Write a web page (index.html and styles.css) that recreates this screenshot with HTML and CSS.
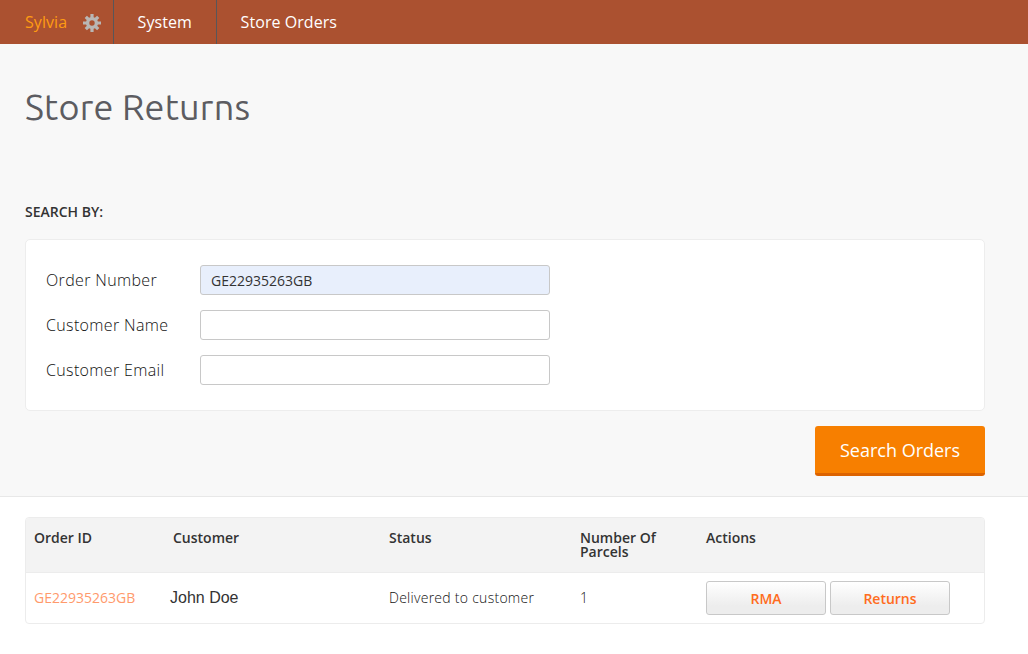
FILE: index.html
```html
<!doctype html>
<html>
<head>
	<meta charset="utf-8" />
	<meta name="viewport" content="width=device-width, initial-scale=1" />

	<title>Store Returns</title>

<link rel="stylesheet" href="styles.css">

</head>
<body>
<nav class="topbar">
	<a class="user" href="#">Sylvia
		<svg class="gear" viewBox="0 0 18 18">
			<g stroke="#b9b6b4" stroke-width="3.2">
				<path d="M9 0V5M9 13V18M0 9H5M13 9H18" />
				<path d="M2.8 2.8L6 6M12 12L15.2 15.2M15.2 2.8L12 6M6 12L2.8 15.2" />
			</g>
			<circle cx="9" cy="9" r="4.4" fill="none" stroke="#b9b6b4" stroke-width="3.4" />
		</svg>
	</a>
	<a href="#">System</a>
	<a href="#">Store Orders</a>
</nav>

<form class="search">
	<h1>Store Returns</h1>
	<h2>SEARCH BY:</h2>

	<div class="panel">
		<div class="field">
			<label for="number">Order Number</label>
			<input class="filled" id="number" type="text" value="GE22935263GB" />
		</div>
		<div class="field">
			<label for="name">Customer Name</label>
			<input id="name" type="text" />
		</div>
		<div class="field">
			<label for="email">Customer Email</label>
			<input id="email" type="text" />
		</div>
	</div>

	<button class="submit" type="button">Search Orders</button>
</form>

<div class="orders">
	<div class="row head">
		<span>Order ID</span>
		<span>Customer</span>
		<span>Status</span>
		<span>Number Of<br />Parcels</span>
		<span>Actions</span>
	</div>
	<div class="row">
		<a class="order" href="#">GE22935263GB</a>
		<span class="customer">John Doe</span>
		<span class="status">Delivered to customer</span>
		<span class="status">1</span>
		<div class="actions">
			<a class="button" href="#">RMA</a>
			<a class="button" href="#">Returns</a>
		</div>
	</div>
</div>

</body>
</html>
```

FILE: styles.css
```css
* {
	box-sizing: border-box;
}

body {
	margin: 0;

	background-color: #fff;
	color: #333;

	font-family: "Open Sans", "Noto Sans", sans-serif;
	font-size: 14px;
}

a {
	text-decoration: none;
}

.topbar {
	display: flex;

	height: 44px;
	background-color: #ab5130;
}

.topbar a {
	padding: 0 23px 0 23.6px;

	color: #fff;
	font-size: 16px;
	line-height: 44px;
	letter-spacing: 0.06px;
}

.topbar a + a {
	border-left: solid 1px #585659;
}

.topbar .user + a {
	width: 103px;
}

.topbar a.user {
	display: flex;
	align-items: center;
	gap: 16px;

	width: 113px;
	padding: 0 0 0 25px;

	color: #ff9c12;
}

.gear {
	flex: none;

	width:	18px;
	height:	18px;
	margin-top: 2px;
}

.search {
	display: flex;
	flex-direction: column;

	height: 453px;
	padding: 38px 43px 0 25px;

	border-bottom: solid 1px #e8e8e8;
	background-color: #f8f8f8;
}

h1 {
	margin: 0;

	color: #5c5c61;
	font-family: Ubuntu, "Open Sans", "Noto Sans", sans-serif;
	font-size: 36px;
	font-weight: normal;
	line-height: 50px;
	letter-spacing: 0.22px;
}

h2 {
	margin: 70px 0 17px;

	font-size: 14px;
	font-weight: 600;
	line-height: 20px;
}

.panel {
	height: 172px;
	padding: 25px 20px;

	border: solid 1px #ededed;
	border-radius: 5px;
	background-color: #fff;
}

.field {
	display: flex;
	align-items: center;

	height: 30px;
	margin-bottom: 15px;
}

.field label {
	width: 154px;

	color: #111;
	font-size: 16px;
	font-weight: 300;
	letter-spacing: 0.35px;
}

.field input {
	width: 350px;
	height: 30px;
	padding: 0 10px;

	border: solid 1px #c8c8c8;
	border-radius: 3px;
	background-color: #fff;

	color: #333;
	font: 14px "Open Sans", sans-serif;
}

.field input.filled {
	background-color: #e8effc;
}

.submit {
	align-self: flex-end;

	width: 170px;
	height: 50px;
	margin-top: 15px;
	padding: 0;

	border: 0;
	border-bottom: solid 3px #dc6300;
	border-radius: 3px;
	background-color: #f77f00;

	color: #fff;
	font: 18px "Open Sans", sans-serif;
}

.orders {
	margin: 20px 43px 0 25px;

	border: solid 1px #ececec;
	border-radius: 4px;
	overflow: hidden;
}

.row {
	display: grid;
	grid-template-columns: 139px 216px 191px 126px 1fr;
	align-items: center;

	height: 50px;
	padding-left: 8px;
}

.row.head {
	align-items: start;

	height: 55px;
	padding-top: 13px;

	border-bottom: solid 1px #ececec;
	background-color: #f3f3f3;

	font-weight: 600;
	line-height: 14px;
}

.order {
	padding-bottom: 2px;

	color: #ff9a6c;
}

.customer {
	margin-left: -3px;

	font-family: "Liberation Sans", sans-serif;
	font-size: 16px;
}

.status {
	padding-bottom: 2px;

	color: #111;
	font-weight: 300;
	letter-spacing: 0.27px;
}

.actions {
	display: flex;
	gap: 4px;
}

.button {
	width: 120px;
	height: 34px;

	border: solid 1px #c8c8c8;
	border-radius: 3px;
	background: linear-gradient(#fff, #ededed 75%);

	color: #ff6c20;
	font-weight: 600;
	line-height: 34px;
	text-align: center;
}
```
